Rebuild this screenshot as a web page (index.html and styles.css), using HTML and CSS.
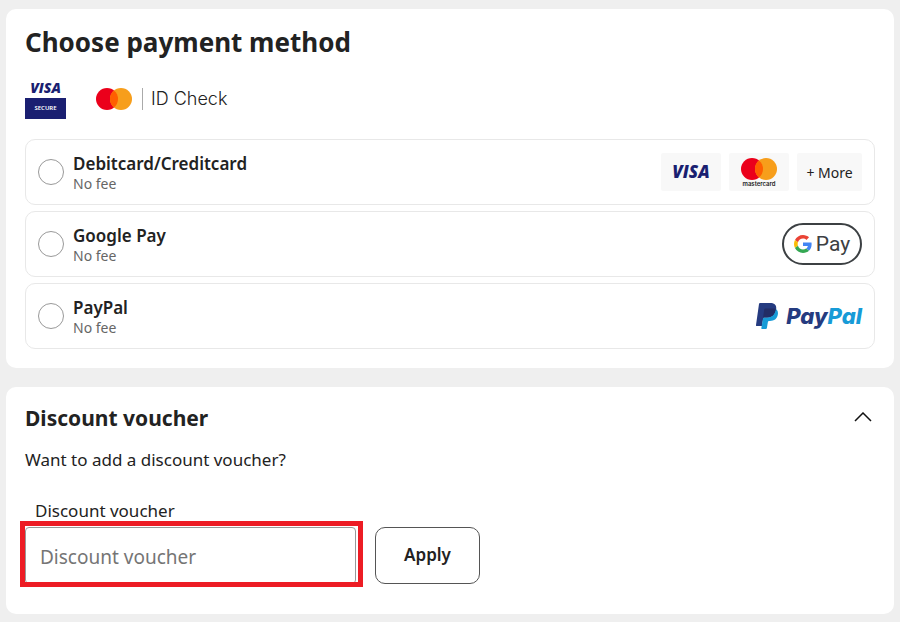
FILE: index.html
```html
<!DOCTYPE html>
<html lang="en">
<head>
    <meta charset="UTF-8">
    <meta name="viewport" content="width=device-width, initial-scale=1.0">
    <title>Payment</title>
    <link rel="stylesheet" href="styles.css">
</head>
<body>
    <main class="page">
        <section class="card payment">
            <h1>Choose payment method</h1>

            <div class="badges">
                <div class="visa-secure">
                    <span class="visa visa-small">VISA</span>
                    <span class="secure">SECURE</span>
                </div>
                <div class="id-check">
                    <svg width="36" height="22" viewBox="0 0 36 22" aria-hidden="true">
                        <circle cx="11" cy="11" r="11" fill="#eb001b"/>
                        <circle cx="25" cy="11" r="11" fill="#f79e1b"/>
                        <path d="M18 2.5a11 11 0 0 1 0 17a11 11 0 0 1 0-17z" fill="#ff5f00"/>
                    </svg>
                    <span class="id-check-text">ID Check</span>
                </div>
            </div>

            <div class="options">
                <label class="option">
                    <input type="radio" name="method" value="card">
                    <span class="option-text">
                        <span class="option-name">Debitcard/Creditcard</span>
                        <span class="option-fee">No fee</span>
                    </span>
                    <span class="logos">
                        <span class="tile"><span class="visa">VISA</span></span>
                        <span class="tile">
                            <svg width="36" height="22" viewBox="0 0 36 22" aria-hidden="true">
                                <circle cx="11" cy="11" r="11" fill="#eb001b"/>
                                <circle cx="25" cy="11" r="11" fill="#f79e1b"/>
                                <path d="M18 2.5a11 11 0 0 1 0 17a11 11 0 0 1 0-17z" fill="#ff5f00"/>
                            </svg>
                            <span class="mastercard-text">mastercard</span>
                        </span>
                        <span class="tile tile-more">+ More</span>
                    </span>
                </label>

                <label class="option">
                    <input type="radio" name="method" value="googlepay">
                    <span class="option-text">
                        <span class="option-name">Google Pay</span>
                        <span class="option-fee">No fee</span>
                    </span>
                    <span class="gpay">
                        <svg width="18" height="18" viewBox="0 0 48 48" aria-hidden="true">
                            <path fill="#ea4335" d="M24 9.5c3.54 0 6.71 1.22 9.21 3.6l6.85-6.85C35.9 2.38 30.47 0 24 0 14.62 0 6.51 5.38 2.56 13.22l7.98 6.19C12.43 13.72 17.74 9.5 24 9.5z"/>
                            <path fill="#4285f4" d="M46.98 24.55c0-1.57-.15-3.09-.38-4.55H24v9.02h12.94c-.58 2.96-2.26 5.48-4.78 7.18l7.73 6c4.51-4.18 7.09-10.36 7.09-17.65z"/>
                            <path fill="#fbbc05" d="M10.53 28.59c-.48-1.45-.76-2.99-.76-4.59s.27-3.14.76-4.59l-7.98-6.19C.92 16.46 0 20.12 0 24s.92 7.54 2.56 10.78l7.97-6.19z"/>
                            <path fill="#34a853" d="M24 48c6.48 0 11.93-2.13 15.89-5.81l-7.73-6c-2.15 1.45-4.92 2.3-8.16 2.3-6.26 0-11.57-4.22-13.47-9.91l-7.98 6.19C6.51 42.62 14.62 48 24 48z"/>
                        </svg>
                        <span class="gpay-text">Pay</span>
                    </span>
                </label>

                <label class="option">
                    <input type="radio" name="method" value="paypal">
                    <span class="option-text">
                        <span class="option-name">PayPal</span>
                        <span class="option-fee">No fee</span>
                    </span>
                    <span class="paypal">
                        <svg width="22" height="26" viewBox="0 0 22 26" aria-hidden="true">
                            <path fill="#253b80" d="M4 0h10c5 0 7 2.6 6 7-1 5-4.200 7.500-9 7.500H8.500c-.7 0-1.200.4-1.300 1.100L6 23H.7c-.5 0-.8-.4-.7-.9L3 .9C3.100.4 3.500 0 4 0z"/>
                            <path fill="#179bd7" d="M19.800 6c1.900 1.200 2.500 3.200 2 5.800-.9 4.300-3.600 6.200-7.800 6.200h-1c-.6 0-1 .4-1.100 1l-1 6.100c-.1.500-.5.900-1 .9H5.900c-.4 0-.7-.4-.6-.8L7 15.600c.1-.7.700-1.100 1.400-1.100H11c4.700 0 8-2.700 8.800-8.500z"/>
                            <path fill="#222d65" d="M9.500 5.500h7.800c1 0 1.800.1 2.500.5-.8 5.800-4.100 8.500-8.800 8.500H8.400c-.7 0-1.300.4-1.400 1.100L8.200 6.600c.1-.6.600-1.100 1.300-1.100z"/>
                        </svg>
                        <span class="paypal-text">Pay<span class="pal">Pal</span></span>
                    </span>
                </label>
            </div>
        </section>

        <section class="card voucher">
            <div class="voucher-head">
                <h2>Discount voucher</h2>
                <button type="button" class="toggle" aria-label="Collapse" aria-expanded="true">
                    <svg width="18" height="10" viewBox="0 0 18 10" aria-hidden="true">
                        <path d="M1 9l8-8 8 8" fill="none" stroke="#111" stroke-width="1.500"/>
                    </svg>
                </button>
            </div>
            <p>Want to add a discount voucher?</p>
            <form class="voucher-form">
                <label for="voucher">Discount voucher</label>
                <div class="voucher-row">
                    <div class="highlight">
                        <input type="text" id="voucher" placeholder="Discount voucher">
                    </div>
                    <button type="button" class="apply">Apply</button>
                </div>
            </form>
        </section>
    </main>
</body>
</html>
```
FILE: styles.css
```css
* {
    box-sizing: border-box;
}

body {
    margin: 0;
    font-family: "Noto Sans", sans-serif;
    background-color: #efefef;
    color: #222;
}

.page {
    display: flex;
    flex-direction: column;
    gap: 19px;
    padding: 9px 6px 8px;
}

.card {
    background-color: #fff;
    border-radius: 10px;
    padding: 15px 19px 19px;
}

h1 {
    margin: 0;
    font-size: 26px;
    line-height: 36px;
    font-weight: 700;
}

h2 {
    margin: 0;
    font-size: 21px;
    line-height: 30px;
    font-weight: 700;
}

.badges {
    display: flex;
    align-items: center;
    gap: 30px;
    margin: 18px 0 20px;
}

.visa-secure {
    display: flex;
    flex-direction: column;
    width: 41px;
    text-align: center;
}

.visa {
    font-family: "Open Sans", sans-serif;
    font-size: 17px;
    line-height: 20px;
    font-weight: 800;
    font-style: italic;
    color: #1a1f71;
}

.visa-small {
    font-size: 14px;
}

.secure {
    background-color: #1a1f71;
    color: #fff;
    font-size: 6px;
    line-height: 21px;
    font-weight: 600;
}

.id-check {
    display: flex;
    align-items: center;
    gap: 10px;
}

.id-check-text {
    border-left: 1px solid #aaa;
    padding-left: 8px;
    font-family: Inter, sans-serif;
    font-size: 18px;
    line-height: 22px;
    font-weight: 300;
}

.options {
    display: flex;
    flex-direction: column;
    gap: 6px;
}

.option {
    display: flex;
    align-items: center;
    gap: 9px;
    height: 66px;
    padding: 0 12px;
    border: 1px solid #e8e8e8;
    border-radius: 10px;
    cursor: pointer;
}

.option input {
    appearance: none;
    width: 26px;
    height: 26px;
    margin: 0;
    border: 1px solid #999;
    border-radius: 50%;
    background-color: #fff;
}

.option input:checked {
    border: 8px solid #222;
}

.option-text {
    display: flex;
    flex-direction: column;
    flex: 1;
}

.option-name {
    font-size: 17px;
    line-height: 23px;
    font-weight: 600;
}

.option-fee {
    font-size: 14px;
    line-height: 17px;
    color: #666;
}

.logos {
    display: flex;
    gap: 8px;
}

.tile {
    display: flex;
    flex-direction: column;
    align-items: center;
    justify-content: center;
    width: 60px;
    height: 38px;
    background-color: #f8f8f8;
    border-radius: 2px;
}

.mastercard-text {
    font-family: Inter, sans-serif;
    font-size: 6px;
    line-height: 7px;
    font-weight: 600;
}

.tile-more {
    width: 65px;
    font-size: 14px;
}

.gpay {
    display: flex;
    align-items: center;
    justify-content: center;
    gap: 4px;
    width: 80px;
    height: 42px;
    border: 2px solid #3c4043;
    border-radius: 21px;
}

.gpay-text {
    font-family: Roboto, sans-serif;
    font-size: 21px;
    line-height: 24px;
    color: #3c4043;
}

.paypal {
    display: flex;
    align-items: center;
    gap: 8px;
}

.paypal-text {
    font-family: Inter, sans-serif;
    font-size: 22px;
    line-height: 26px;
    font-weight: 800;
    font-style: italic;
    color: #253b80;
}

.pal {
    color: #179bd7;
}

.voucher {
    padding-top: 16px;
    padding-bottom: 30px;
}

.voucher-head {
    display: flex;
    align-items: center;
    justify-content: space-between;
}

.toggle {
    display: flex;
    padding: 3px 3px 5px;
    border: none;
    background: none;
    cursor: pointer;
}

.voucher p {
    margin: 15px 0 28px;
    font-size: 17px;
    line-height: 24px;
}

.voucher-form label {
    display: block;
    padding-left: 10px;
    font-size: 17px;
    line-height: 22px;
}

.voucher-row {
    display: flex;
    gap: 19px;
    margin-top: 5px;
}

.highlight {
    position: relative;
    width: 331px;
}

/* red frame round the voucher field */
.highlight::after {
    content: "";
    position: absolute;
    inset: -6px -7px -3px -5px;
    border: 5px solid #ed1c24;
    pointer-events: none;
}

.highlight input {
    display: block;
    width: 100%;
    height: 57px;
    padding: 2px 14px 0;
    border: 1px solid #999;
    border-radius: 4px;
    font-family: inherit;
    font-size: 19px;
    color: #222;
    outline: none;
}

.highlight input::placeholder {
    color: #757575;
}

.apply {
    width: 105px;
    height: 57px;
    padding: 0 0 2px;
    border: 1px solid #555;
    border-radius: 10px;
    background-color: #fff;
    font-family: inherit;
    font-size: 17px;
    font-weight: 600;
    color: #222;
    cursor: pointer;
}
```
